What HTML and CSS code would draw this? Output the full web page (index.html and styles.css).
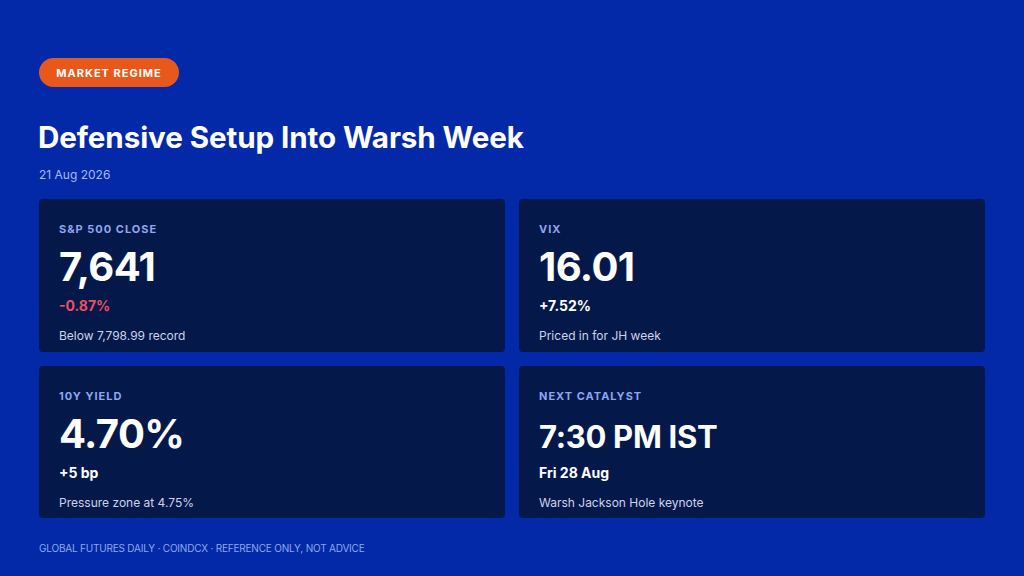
FILE: index.html
```html
<!DOCTYPE html>
<html lang="en">
<head>
<meta charset="utf-8">
<title>Market Regime</title>
<link rel="stylesheet" href="styles.css">
</head>
<body>
<main class="page">
  <div class="pill">MARKET REGIME</div>
  <h1 class="title">Defensive Setup Into Warsh Week</h1>
  <div class="date">21 Aug 2026</div>
  <section class="grid">
    <div class="card">
      <div class="label">S&amp;P 500 CLOSE</div>
      <div class="value">7,641</div>
      <div class="change neg">-0.87%</div>
      <div class="note">Below 7,798.99 record</div>
    </div>
    <div class="card">
      <div class="label">VIX</div>
      <div class="value">16.01</div>
      <div class="change">+7.52%</div>
      <div class="note">Priced in for JH week</div>
    </div>
    <div class="card">
      <div class="label">10Y YIELD</div>
      <div class="value">4.70%</div>
      <div class="change">+5 bp</div>
      <div class="note">Pressure zone at 4.75%</div>
    </div>
    <div class="card">
      <div class="label">NEXT CATALYST</div>
      <div class="value sm">7:30 PM IST</div>
      <div class="change">Fri 28 Aug</div>
      <div class="note">Warsh Jackson Hole keynote</div>
    </div>
  </section>
  <footer class="footer">GLOBAL FUTURES DAILY · COINDCX · REFERENCE ONLY, NOT ADVICE</footer>
</main>
</body>
</html>
```
FILE: styles.css
```css
* { box-sizing: border-box; }
html, body {
  margin: 0;
  padding: 0;
  width: 1024px;
  height: 576px;
  overflow: hidden;
  background: #0328a8;
  font-family: "Inter", "DejaVu Sans", sans-serif;
  color: #ffffff;
}
.page {
  padding: 58px 39px 0 39px;
  display: flex;
  flex-direction: column;
  align-items: flex-start;
}
.pill {
  height: 29px;
  width: 140px;
  border-radius: 15px;
  background: #e8581a;
  color: #ffffff;
  font-size: 11px;
  font-weight: 700;
  letter-spacing: 1px;
  display: flex;
  align-items: center;
  justify-content: center;
}
.title {
  margin: 32px 0 0 -1px;
  font-size: 29.6px;
  line-height: 36px;
  font-weight: 700;
  letter-spacing: -0.1px;
}
.date {
  margin-top: 12px;
  font-size: 12px;
  line-height: 16px;
  color: #a9b9f0;
}
.grid {
  margin-top: 16px;
  width: 946px;
  display: grid;
  grid-template-columns: 1fr 1fr;
  grid-template-rows: 153px 152px;
  gap: 14px;
}
.card {
  background: #05184a;
  border-radius: 4px;
  padding: 23px 20px 0 20px;
  display: flex;
  flex-direction: column;
}
.label {
  font-size: 11px;
  line-height: 14px;
  font-weight: 700;
  letter-spacing: 1px;
  color: #8fa6f0;
}
.value {
  margin-top: 7px;
  font-size: 40px;
  line-height: 48px;
  font-weight: 700;
  letter-spacing: -0.6px;
}
.value.sm {
  font-size: 31px;
  letter-spacing: -0.3px;
  padding-top: 3px;
  margin-bottom: -3px;
}
.change {
  margin-top: 6px;
  font-size: 14px;
  line-height: 18px;
  font-weight: 700;
  color: #ffffff;
}
.change.neg { color: #ea4f62; }
.note {
  margin-top: 13px;
  font-size: 12px;
  line-height: 16px;
  color: #cdd4ea;
}
.footer {
  margin-top: 23px;
  font-size: 10px;
  line-height: 14px;
  letter-spacing: -0.2px;
  color: #8fa8ec;
}
```
